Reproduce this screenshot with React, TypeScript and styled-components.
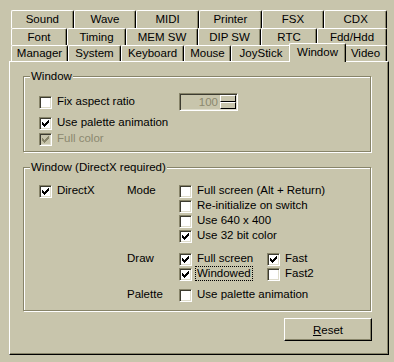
import React from 'react';
import styled, { createGlobalStyle } from 'styled-components';

const FACE = '#c8c5ac';
const SHADOW = '#878469';
const LIGHT = '#ffffff';
const DARK = '#000000';
const DISABLED = '#8b886f';

const GlobalStyle = createGlobalStyle`
  html, body {
    margin: 0;
    padding: 0;
    background: ${FACE};
    overflow: hidden;
  }
  body {
    font-family: 'Liberation Sans', Arial, sans-serif;
    font-size: 11.5px;
    color: #000;
  }
`;

const Dialog = styled.div`
  width: 394px;
  height: 362px;
  box-sizing: border-box;
  padding-top: 10px;
  background: ${FACE};
`;

const TabRow = styled.div<{ $h: number }>`
  display: flex;
  height: ${(p) => p.$h}px;
  width: 376px;
  margin-left: 11px;
`;

const Tab = styled.div<{ $w?: number; $active?: boolean }>`
  flex: ${(p) => (p.$w ? `0 0 ${p.$w}px` : '1 1 0')};
  box-sizing: border-box;
  display: flex;
  justify-content: center;
  align-items: ${(p) => (p.$active ? 'flex-start' : 'center')};
  padding-top: ${(p) => (p.$active ? 2 : 0)}px;
  line-height: 13px;
  white-space: nowrap;
  background: ${FACE};
  border-top: 1px solid ${LIGHT};
  border-left: 1px solid ${LIGHT};
  border-right: 1px solid ${DARK};
  box-shadow: inset -1px 0 0 ${SHADOW};
  border-radius: 2px 2px 0 0;
  ${(p) =>
    p.$active &&
    `
    position: relative;
    z-index: 1;
    align-self: flex-start;
    height: 19px;
    margin: -2px -2px 0;
    flex-basis: ${(p.$w ?? 0) + 4}px;
  `}
`;

const Panel = styled.div`
  margin-left: 9px;
  width: 380px;
  height: 294px;
  box-sizing: border-box;
  border-top: 1px solid ${LIGHT};
  border-left: 1px solid ${LIGHT};
  border-right: 1px solid ${DARK};
  border-bottom: 1px solid ${DARK};
  box-shadow: inset -1px -1px 0 ${SHADOW};
  padding: 14px 0 0 13px;
`;

const Group = styled.div<{ $h: number; $pt: number }>`
  position: relative;
  width: 348px;
  height: ${(p) => p.$h}px;
  box-sizing: border-box;
  border: 1px solid ${SHADOW};
  box-shadow: inset 1px 1px 0 ${LIGHT}, 1px 1px 0 ${LIGHT};
  padding: ${(p) => p.$pt}px 0 0 15px;
  & + & {
    margin-top: 15px;
  }
`;

const Legend = styled.span`
  position: absolute;
  top: -8px;
  left: 6px;
  padding: 0 1px;
  line-height: 14px;
  background: ${FACE};
  white-space: nowrap;
`;

const CheckRow = styled.div<{ $mt?: number }>`
  display: flex;
  align-items: flex-start;
  gap: 5px;
  height: 13px;
  margin-top: ${(p) => p.$mt ?? 0}px;
  white-space: nowrap;
`;

const Box = styled.span<{ $disabled?: boolean }>`
  flex: none;
  width: 13px;
  height: 13px;
  box-sizing: border-box;
  display: flex;
  align-items: center;
  justify-content: center;
  border-top: 1px solid ${SHADOW};
  border-left: 1px solid ${SHADOW};
  border-right: 1px solid ${LIGHT};
  border-bottom: 1px solid ${LIGHT};
  box-shadow: inset 1px 1px 0 #3c3b30, inset -1px -1px 0 #dedccb;
  background: ${(p) => (p.$disabled ? FACE : '#ffffff')};
`;

const Label = styled.span<{ $disabled?: boolean; $focus?: boolean }>`
  line-height: 11px;
  color: ${(p) => (p.$disabled ? DISABLED : '#000')};
  outline: ${(p) => (p.$focus ? `1px dotted ${DARK}` : 'none')};
  outline-offset: 1px;
`;

const FirstRow = styled.div`
  display: grid;
  grid-template-columns: 140px auto;
  align-items: center;
  height: 18px;
`;

const Spin = styled.div`
  display: flex;
  width: 59px;
  height: 18px;
  box-sizing: border-box;
  border-top: 1px solid ${SHADOW};
  border-left: 1px solid ${SHADOW};
  border-right: 1px solid ${LIGHT};
  border-bottom: 1px solid ${LIGHT};
  box-shadow: inset 1px 1px 0 #3c3b30, inset -1px -1px 0 #dedccb;
  padding: 1px;
  background: ${FACE};
`;

const SpinValue = styled.span`
  flex: 1;
  text-align: right;
  padding-right: 2px;
  line-height: 14px;
  color: ${DISABLED};
`;

const SpinButtons = styled.div`
  display: flex;
  flex-direction: column;
  width: 16px;
`;

const SpinButton = styled.span`
  flex: 1;
  box-sizing: border-box;
  border-top: 1px solid ${LIGHT};
  border-left: 1px solid ${LIGHT};
  border-right: 1px solid ${DARK};
  border-bottom: 1px solid ${DARK};
  background: ${FACE};
`;

const DxBody = styled.div`
  display: flex;
`;

const DxLeft = styled.div`
  width: 88px;
`;

const Sections = styled.div`
  display: flex;
  flex-direction: column;
`;

const Section = styled.div<{ $mt?: number }>`
  display: flex;
  margin-top: ${(p) => p.$mt ?? 0}px;
`;

const SectionLabel = styled.span`
  width: 52px;
  line-height: 11px;
`;

const Options = styled.div<{ $cols?: number }>`
  display: grid;
  grid-template-columns: ${(p) => (p.$cols === 2 ? '88px auto' : 'auto')};
  grid-auto-rows: 15px;
`;

const ButtonRow = styled.div`
  display: flex;
  justify-content: flex-end;
  width: 349px;
  margin-top: 7px;
`;

const Button = styled.button`
  width: 88px;
  height: 23px;
  box-sizing: border-box;
  padding: 0;
  font: inherit;
  color: #000;
  background: ${FACE};
  border-top: 1px solid ${LIGHT};
  border-left: 1px solid ${LIGHT};
  border-right: 1px solid ${DARK};
  border-bottom: 1px solid ${DARK};
  box-shadow: inset -1px -1px 0 ${SHADOW};
`;

const Checkmark = ({ color }: { color: string }) => (
  <svg width="7" height="7" viewBox="0 0 7 7" shapeRendering="crispEdges">
    {[2, 3, 4, 3, 2, 1, 0].map((top, x) => (
      <rect key={x} x={x} y={top} width="1" height="3" fill={color} />
    ))}
  </svg>
);

type CheckBoxProps = {
  label: string;
  checked?: boolean;
  disabled?: boolean;
  focus?: boolean;
  mt?: number;
};

const CheckBox = ({ label, checked, disabled, focus, mt }: CheckBoxProps) => (
  <CheckRow $mt={mt}>
    <Box $disabled={disabled}>{checked && <Checkmark color={disabled ? SHADOW : DARK} />}</Box>
    <Label $disabled={disabled} $focus={focus}>
      {label}
    </Label>
  </CheckRow>
);

const ROW1 = ['Sound', 'Wave', 'MIDI', 'Printer', 'FSX', 'CDX'];
const ROW2: [string, number][] = [
  ['Font', 56],
  ['Timing', 59],
  ['MEM SW', 72],
  ['DIP SW', 63],
  ['RTC', 56],
  ['Fdd/Hdd', 70],
];
const ROW3: [string, number][] = [
  ['Manager', 57],
  ['System', 53],
  ['Keyboard', 63],
  ['Mouse', 47],
  ['JoyStick', 60],
  ['Window', 53],
  ['Video', 43],
];

const App = () => {
  return (
    <Dialog>
      <GlobalStyle />
      <TabRow $h={18}>
        {ROW1.map((name) => (
          <Tab key={name}>{name}</Tab>
        ))}
      </TabRow>
      <TabRow $h={17}>
        {ROW2.map(([name, w]) => (
          <Tab key={name} $w={w}>
            {name}
          </Tab>
        ))}
      </TabRow>
      <TabRow $h={16}>
        {ROW3.map(([name, w]) => (
          <Tab key={name} $w={w} $active={name === 'Window'}>
            {name}
          </Tab>
        ))}
      </TabRow>
      <Panel>
        <Group $h={76} $pt={16}>
          <Legend>Window</Legend>
          <FirstRow>
            <CheckBox label="Fix aspect ratio" />
            <Spin>
              <SpinValue>100</SpinValue>
              <SpinButtons>
                <SpinButton />
                <SpinButton />
              </SpinButtons>
            </Spin>
          </FirstRow>
          <CheckBox label="Use palette animation" checked mt={6} />
          <CheckBox label="Full color" checked disabled mt={3} />
        </Group>
        <Group $h={144} $pt={17}>
          <Legend>Window (DirectX required)</Legend>
          <DxBody>
            <DxLeft>
              <CheckBox label="DirectX" checked />
            </DxLeft>
            <Sections>
              <Section>
                <SectionLabel>Mode</SectionLabel>
                <Options>
                  <CheckBox label="Full screen (Alt + Return)" />
                  <CheckBox label="Re-initialize on switch" />
                  <CheckBox label="Use 640 x 400" />
                  <CheckBox label="Use 32 bit color" checked />
                </Options>
              </Section>
              <Section $mt={8}>
                <SectionLabel>Draw</SectionLabel>
                <Options $cols={2}>
                  <CheckBox label="Full screen" checked />
                  <CheckBox label="Fast" checked />
                  <CheckBox label="Windowed" checked focus />
                  <CheckBox label="Fast2" />
                </Options>
              </Section>
              <Section $mt={6}>
                <SectionLabel>Palette</SectionLabel>
                <Options>
                  <CheckBox label="Use palette animation" />
                </Options>
              </Section>
            </Sections>
          </DxBody>
        </Group>
        <ButtonRow>
          <Button>
            <u>R</u>eset
          </Button>
        </ButtonRow>
      </Panel>
    </Dialog>
  );
};

export default App;
